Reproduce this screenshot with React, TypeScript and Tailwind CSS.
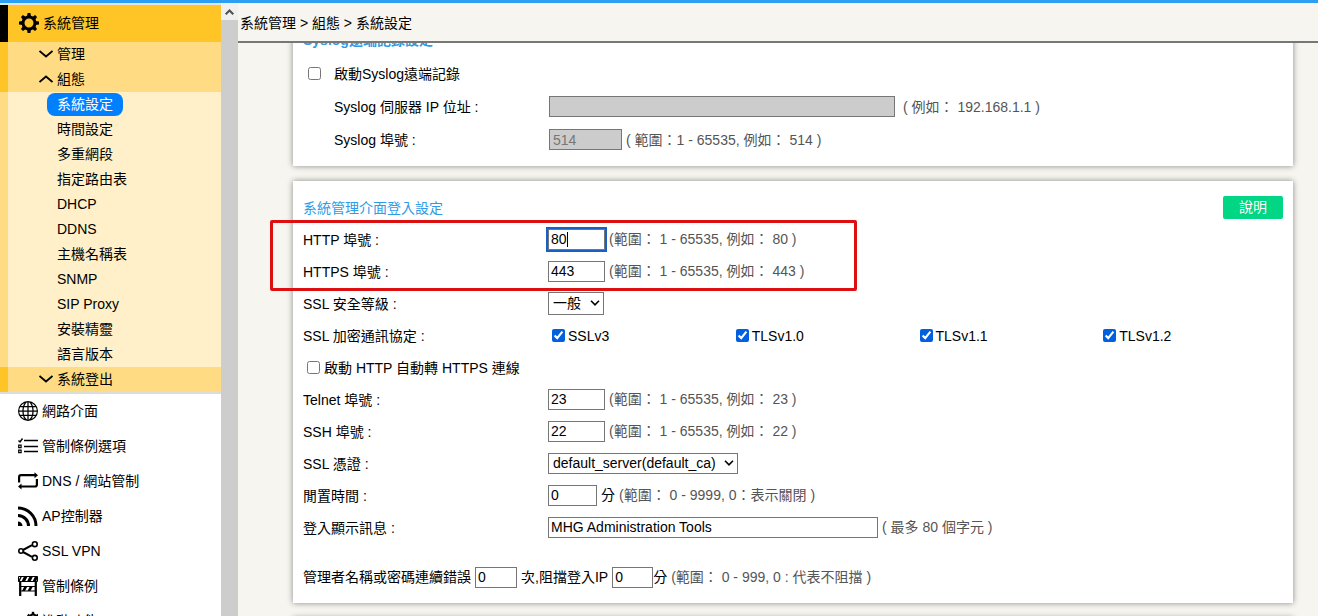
import { useId, useState } from "react";
import type { ReactNode } from "react";
import { BsGlobe } from "react-icons/bs";

const SYSTEM_ITEMS = [
  "系統設定",
  "時間設定",
  "多重網段",
  "指定路由表",
  "DHCP",
  "DDNS",
  "主機名稱表",
  "SNMP",
  "SIP Proxy",
  "安裝精靈",
  "語言版本",
];

const PROTOCOLS = ["SSLv3", "TLSv1.0", "TLSv1.1", "TLSv1.2"];

const FIELD = "h-[21px] border border-[#767676] bg-white px-0.5 text-black";

function GearIcon() {
  return (
    <svg viewBox="0 0 20 20" className="h-5 w-5 shrink-0" fill="none" stroke="black" aria-hidden>
      <circle cx="10" cy="10" r="6" strokeWidth="3" />
      {[0, 45, 90, 135, 180, 225, 270, 315].map((deg) => (
        <path key={deg} d="M8 3.6 8.6 0h2.8l.6 3.6z" fill="black" stroke="none" transform={`rotate(${deg} 10 10)`} />
      ))}
    </svg>
  );
}

function ChecklistIcon() {
  return (
    <svg viewBox="0 0 20 20" className="h-5 w-5" fill="none" stroke="black" aria-hidden>
      <path d="M6 4.5h14M6 10.5h14M6 15.5h14" strokeWidth="1.3" />
      <path d="M.5 4.5 2 6 4.5 2.500" strokeWidth="1.4" />
      <path d="M.7 9.2h2.4v2.4H.7zM.7 14.2h2.4v2.4H.7z" strokeWidth="1.2" />
    </svg>
  );
}

function RepeatIcon() {
  return (
    <svg viewBox="0 0 20 20" className="h-5 w-5" fill="none" stroke="black" strokeWidth="2.2" aria-hidden>
      <path d="M1.100 11.500V6.200Q1.100 4.200 3 4.200h14" />
      <path d="M18.900 8v5.500q0 2-1.900 2H3" />
      <path d="M16.500 1.200v6L20 4.200zM3.500 12.500v6L0 15.500z" fill="black" stroke="none" />
    </svg>
  );
}

function SignalIcon() {
  return (
    <svg viewBox="0 0 20 20" className="h-5 w-5" fill="none" stroke="black" strokeWidth="3" aria-hidden>
      <path d="M0 15.5a4.500 4.500 0 0 1 4.500 4.500H0z" fill="black" stroke="none" />
      <path d="M0 9.500A10.500 10.500 0 0 1 10.500 20" />
      <path d="M0 2A18 18 0 0 1 18 20" />
    </svg>
  );
}

function ShareIcon() {
  return (
    <svg viewBox="0 0 20 20" className="h-5 w-5" fill="none" stroke="black" strokeWidth="1.600" aria-hidden>
      <path d="M5 9 14 4.200M5 11l9 4.800" strokeWidth="2" />
      <circle cx="3" cy="10" r="2.200" />
      <circle cx="16.800" cy="3.200" r="2.400" />
      <circle cx="16.800" cy="16.800" r="2.400" />
    </svg>
  );
}

function BarrierIcon() {
  return (
    <svg viewBox="0 0 20 20" className="h-5 w-5" fill="none" stroke="black" aria-hidden>
      <path d="M.5.500h19v5H.5z" />
      <path
        d="M0 5.500 2.500.500H4L1.500 5.500zM3.500 5.500 6 .500h3.500L7 5.500zM9 5.500l2.500-5H15l-2.500 5zM14.500 5.500l2.500-5h2.500v2L18 5.500z"
        fill="black"
        stroke="none"
      />
      <path d="M2.200 5.500V20M17.800 5.500V20" strokeWidth="2.200" />
      <path d="M2.500 10.500h15v4.500h-15z" strokeWidth="1.200" />
      <path d="m4 15 2.300-4.500h3L7 15zM9.500 15l2.300-4.500h3L12.500 15z" fill="black" stroke="none" />
    </svg>
  );
}

function ToolsIcon() {
  return (
    <svg viewBox="0 0 20 20" className="h-5 w-5" fill="none" stroke="black" aria-hidden>
      <circle cx="15" cy="7" r="3.500" strokeWidth="2.200" />
      {[0, 60, 120, 180, 240, 300].map((deg) => (
        <path key={deg} d="M13.800 3V.800h2.400V3z" fill="black" stroke="none" transform={`rotate(${deg} 15 7)`} />
      ))}
      <circle cx="6" cy="14" r="4" strokeWidth="2" />
    </svg>
  );
}

const SECTIONS = [
  { label: "網路介面", icon: <BsGlobe className="h-5 w-5" /> },
  { label: "管制條例選項", icon: <ChecklistIcon /> },
  { label: "DNS / 網站管制", icon: <RepeatIcon /> },
  { label: "AP控制器", icon: <SignalIcon /> },
  { label: "SSL VPN", icon: <ShareIcon /> },
  { label: "管制條例", icon: <BarrierIcon /> },
  { label: "進階功能", icon: <ToolsIcon /> },
];

function GroupRow({ label, open = false }: { label: string; open?: boolean }) {
  return (
    <button
      type="button"
      aria-expanded={open}
      className="flex h-[25px] w-full items-center gap-1 border-l-8 border-[#ffc425] bg-[#ffdc83] pb-0.5 pl-[31px] text-left"
    >
      <svg viewBox="0 0 14 8" className="h-2 w-3.5" fill="none" stroke="black" strokeWidth="1.800" aria-hidden>
        <path d={open ? "M.5 7 7 1.500 13.500 7" : "M.5 1 7 6.500 13.500 1"} />
      </svg>
      {label}
    </button>
  );
}

function Sidebar() {
  const [current, setCurrent] = useState("系統設定");
  return (
    <nav className="w-[221px] shrink-0 overflow-hidden border-t-2 border-[#e4e4e4] bg-white">
      <button
        type="button"
        className="flex h-[37px] w-full items-center gap-1 border-l-8 border-black bg-[#ffc425] pb-0.5 pl-[11px] text-left"
      >
        <GearIcon />
        系統管理
      </button>
      <GroupRow label="管理" />
      <GroupRow label="組態" open />
      <ul className="border-l-8 border-[#ffdc83] bg-[#fff0c9]">
        {SYSTEM_ITEMS.map((item) => (
          <li key={item} className="flex h-[25px] items-center pl-[39px]">
            <a
              href="#"
              onClick={() => setCurrent(item)}
              className={`rounded-lg px-2.5 leading-[23px] ${item === current ? "bg-[#0080ff] text-white" : ""}`}
            >
              {item}
            </a>
          </li>
        ))}
      </ul>
      <GroupRow label="系統登出" />
      <ul className="border-t-2 border-[#dcdcdc]">
        {SECTIONS.map((s) => (
          <li key={s.label}>
            <a href="#" className="flex h-[35px] items-center gap-1 pb-0.5 pl-[18px]">
              {s.icon}
              {s.label}
            </a>
          </li>
        ))}
      </ul>
    </nav>
  );
}

function ScrollTrack() {
  return (
    <div className="w-[17px] shrink-0 bg-[#cdcdcd]" aria-hidden>
      <div className="flex h-[17px] items-center justify-center bg-[#f0f0f0]">
        <svg viewBox="0 0 9 6" className="h-1.5 w-[9px]" fill="none" stroke="#505050" strokeWidth="2">
          <path d="M.7 5.300 4.500 1.500l3.800 3.800" />
        </svg>
      </div>
    </div>
  );
}

function Hint({ children }: { children: ReactNode }) {
  return <span className="whitespace-pre text-[#555]">{children}</span>;
}

// One label / control line. The render prop gets the id that ties the two.
function Row({ label, children }: { label: string; children: (id: string) => ReactNode }) {
  const id = useId();
  return (
    <div className="grid h-8 grid-cols-[1fr_3fr] items-center">
      <label htmlFor={id}>{label}</label>
      <div className="flex items-center gap-1 pb-0.5">{children(id)}</div>
    </div>
  );
}

function SelectBox({ id, className, children }: { id: string; className: string; children: ReactNode }) {
  return (
    <div className="relative">
      <select id={id} className={`block appearance-none border border-[#767676] bg-white pl-1 leading-[19px] ${className}`}>
        {children}
      </select>
      <svg
        viewBox="0 0 10 6"
        className="pointer-events-none absolute top-1/2 right-1 h-1.5 w-2.5 -translate-y-1/2"
        fill="none"
        stroke="black"
        strokeWidth="1.600"
        aria-hidden
      >
        <path d="M1 .8 5 4.800 9 .8" />
      </svg>
    </div>
  );
}

const CHECKBOX = "h-[13px] w-[13px] shrink-0 accent-[#0060df]";

function SyslogCard() {
  return (
    <section className="-mt-[29px] bg-white p-2.5 shadow-[0_0_6px_rgba(0,0,0,0.45)]">
      <h2 className="h-[33px] leading-[33px] font-bold text-[#2f9be6]">Syslog遠端記錄設定</h2>
      <div className="flex h-[33px] items-center pl-[5px]">
        <input id="syslog" type="checkbox" className={CHECKBOX} />
        <label htmlFor="syslog" className="pl-[13px]">
          啟動Syslog遠端記錄
        </label>
      </div>
      <div className="flex h-[33px] items-center pl-[31px]">
        <label htmlFor="syslog-ip" className="w-[215px]">
          Syslog 伺服器 IP 位址 :
        </label>
        <input id="syslog-ip" disabled className="h-[21px] w-[346px] border border-[#767676] bg-[#ccc] px-[3px]" />
        <span className="pl-2 whitespace-pre text-[#555]">( 例如： 192.168.1.1 )</span>
      </div>
      <div className="flex h-[33px] items-center pl-[31px]">
        <label htmlFor="syslog-port" className="w-[215px]">
          Syslog 埠號 :
        </label>
        <input
          id="syslog-port"
          disabled
          defaultValue="514"
          className="h-[21px] w-[73px] border border-[#767676] bg-[#ccc] px-[3px] text-[#777]"
        />
        <span className="pl-1 whitespace-pre text-[#555]">( 範圍：1 - 65535, 例如： 514 )</span>
      </div>
    </section>
  );
}

function LoginCard() {
  return (
    <section className="relative bg-white px-2.5 pt-[11px] pb-2.5 shadow-[0_0_6px_rgba(0,0,0,0.45)]">
      <div className="flex h-8 items-center justify-between">
        <h2 className="text-[#2f9be6]">系統管理介面登入設定</h2>
        <button type="button" className="mb-0.5 h-[23px] w-[60px] rounded-xs bg-[#00d684] text-white">
          說明
        </button>
      </div>
      <Row label="HTTP 埠號 :">
        {(id) => (
          <>
            <div className="relative">
              <input
                id={id}
                defaultValue="80"
                className={`${FIELD} block w-[57px] caret-transparent outline-2 outline-[#1860c4]`}
              />
              <span className="absolute top-[3px] left-[19px] h-[15px] w-px bg-black" aria-hidden />
            </div>
            <Hint>(範圍： 1 - 65535, 例如： 80 )</Hint>
          </>
        )}
      </Row>
      <Row label="HTTPS 埠號 :">
        {(id) => (
          <>
            <input id={id} defaultValue="443" className={`${FIELD} w-[57px]`} />
            <Hint>(範圍： 1 - 65535, 例如： 443 )</Hint>
          </>
        )}
      </Row>
      <Row label="SSL 安全等級 :">
        {(id) => (
          <SelectBox id={id} className="h-[23px] w-14">
            <option>一般</option>
          </SelectBox>
        )}
      </Row>
      <div role="group" aria-labelledby="ssl-protocols" className="grid h-8 grid-cols-[1fr_3fr] items-center">
        <span id="ssl-protocols">SSL 加密通訊協定 :</span>
        <div className="grid grid-cols-4">
          {PROTOCOLS.map((p) => (
            <label key={p} className="flex items-center gap-[3px] pl-1">
              <input type="checkbox" defaultChecked className={`${CHECKBOX} mb-0.5`} />
              {p}
            </label>
          ))}
        </div>
      </div>
      <label className="flex h-8 items-center gap-1 pl-1">
        <input type="checkbox" className={`${CHECKBOX} mb-0.5`} />
        啟動 HTTP 自動轉 HTTPS 連線
      </label>
      <Row label="Telnet 埠號 :">
        {(id) => (
          <>
            <input id={id} defaultValue="23" className={`${FIELD} w-[57px]`} />
            <Hint>(範圍： 1 - 65535, 例如： 23 )</Hint>
          </>
        )}
      </Row>
      <Row label="SSH 埠號 :">
        {(id) => (
          <>
            <input id={id} defaultValue="22" className={`${FIELD} w-[57px]`} />
            <Hint>(範圍： 1 - 65535, 例如： 22 )</Hint>
          </>
        )}
      </Row>
      <Row label="SSL 憑證 :">
        {(id) => (
          <SelectBox id={id} className="h-[21px] w-[190px]">
            <option>default_server(default_ca)</option>
          </SelectBox>
        )}
      </Row>
      <Row label="閒置時間 :">
        {(id) => (
          <>
            <input id={id} defaultValue="0" className={`${FIELD} w-[49px]`} />
            <span>分</span>
            <Hint>(範圍： 0 - 9999, 0：表示關閉 )</Hint>
          </>
        )}
      </Row>
      <Row label="登入顯示訊息 :">
        {(id) => (
          <>
            <input id={id} defaultValue="MHG Administration Tools" className={`${FIELD} w-[330px]`} />
            <Hint>( 最多 80 個字元 )</Hint>
          </>
        )}
      </Row>
      <div className="mt-[17px] flex h-8 items-center gap-1">
        <label htmlFor="fail-count">管理者名稱或密碼連續錯誤</label>
        <input id="fail-count" defaultValue="0" className={`${FIELD} w-[42px]`} />
        <label htmlFor="block-minutes">次,阻擋登入IP</label>
        <div className="flex items-center">
          <input id="block-minutes" defaultValue="0" className={`${FIELD} w-[41px]`} />
          <span>分</span>
        </div>
        <Hint>(範圍： 0 - 999, 0 : 代表不阻擋 )</Hint>
      </div>
      {/* callout around the two web ports */}
      <div
        className="pointer-events-none absolute top-[39px] -left-[23px] h-[71px] w-[587px] rounded-xs border-3 border-[#dc1010]"
        aria-hidden
      />
    </section>
  );
}

export default function App() {
  return (
    <div className="flex h-screen flex-col overflow-hidden border-t-3 border-[#2b9ff3] bg-[#f6f5f0] font-['Liberation_Sans','Noto_Sans_CJK_TC',sans-serif] text-sm text-black">
      <div className="flex min-h-0 flex-1">
        <Sidebar />
        <ScrollTrack />
        <div className="flex min-w-0 flex-1 flex-col">
          <header className="h-10 shrink-0 border-b-2 border-[#777] pl-0.5 leading-10">
            系統管理 &gt; 組態 &gt; 系統設定
          </header>
          <main className="flex min-h-0 flex-1 flex-col gap-[15px] overflow-hidden pr-[25px] pl-[55px] *:shrink-0">
            <SyslogCard />
            <LoginCard />
            <section className="h-10 bg-white shadow-[0_0_6px_rgba(0,0,0,0.45)]" />
          </main>
        </div>
      </div>
    </div>
  );
}
